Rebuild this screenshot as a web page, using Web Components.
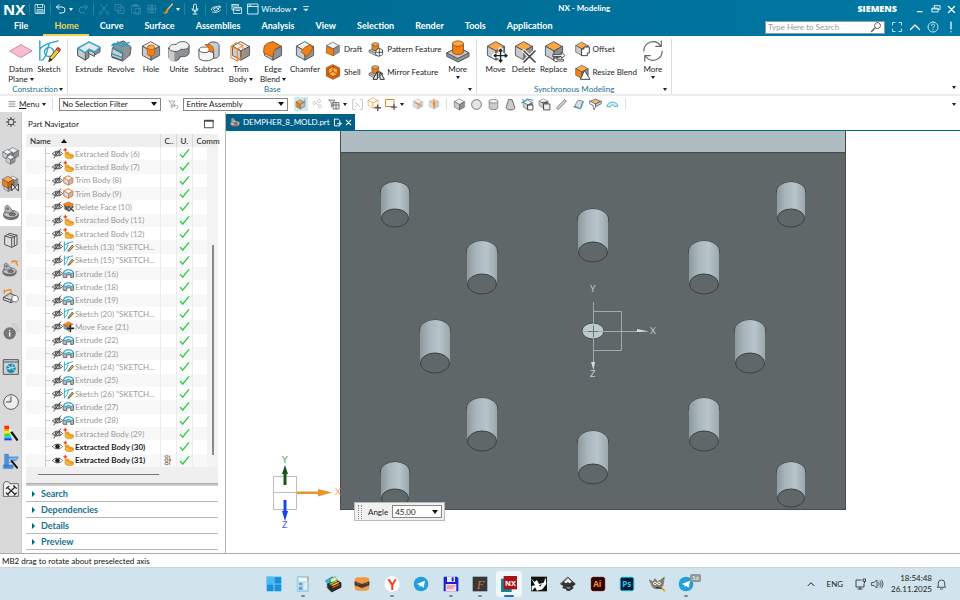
<!DOCTYPE html>
<html lang="en">
<head>
<meta charset="utf-8">
<title>NX - Modeling</title>
<style>
    body {
        margin: 0;
        min-height: 100vh;
        display: grid;
        grid-template-rows: auto auto auto 1fr auto auto;
        font: 8px/10px Lato, "Open Sans", sans-serif;
        color: #1c1c1c;
        background: #fff;
        --link: #17708f;
    }
    .work {
        display: grid;
        grid-template-columns: 22px 204px 1fr;
        min-height: 0;
    }
</style>
</head>
<body>
    <nx-titlebar></nx-titlebar>

    <nx-ribbon>
        <nx-group label="Construction">
            <nx-tool icon="datum" menu="inline">Datum<br>Plane</nx-tool>
            <nx-tool icon="sketch">Sketch</nx-tool>
        </nx-group>
        <nx-group label="Base">
            <nx-tool icon="extrude" wide>Extrude</nx-tool>
            <nx-tool icon="revolve" wide>Revolve</nx-tool>
            <nx-tool icon="hole">Hole</nx-tool>
            <nx-tool icon="unite">Unite</nx-tool>
            <nx-tool icon="subtract" wide>Subtract</nx-tool>
            <nx-tool icon="trim" menu="inline" wide>Trim<br>Body</nx-tool>
            <nx-tool icon="edge" menu="inline" wide>Edge<br>Blend</nx-tool>
            <nx-tool icon="chamfer" wide>Chamfer</nx-tool>
            <nx-stack>
                <nx-tool icon="draft" row>Draft</nx-tool>
                <nx-tool icon="shell" row>Shell</nx-tool>
            </nx-stack>
            <nx-stack>
                <nx-tool icon="pattern" row>Pattern Feature</nx-tool>
                <nx-tool icon="mirror" row>Mirror Feature</nx-tool>
            </nx-stack>
            <nx-tool icon="boss" menu="below">More</nx-tool>
        </nx-group>
        <nx-group label="Synchronous Modeling">
            <nx-tool icon="move">Move</nx-tool>
            <nx-tool icon="delete">Delete</nx-tool>
            <nx-tool icon="replace" wide>Replace</nx-tool>
            <nx-stack>
                <nx-tool icon="offset" row>Offset</nx-tool>
                <nx-tool icon="resize" row>Resize Blend</nx-tool>
            </nx-stack>
            <nx-tool icon="cycle" menu="below">More</nx-tool>
        </nx-group>
    </nx-ribbon>

    <nx-selection-bar></nx-selection-bar>

    <div class="work">
        <nx-resource-bar></nx-resource-bar>
        <nx-part-navigator>
            <nx-section>Search</nx-section>
            <nx-section>Dependencies</nx-section>
            <nx-section>Details</nx-section>
            <nx-section>Preview</nx-section>
        </nx-part-navigator>
        <nx-viewport>DEMPHER_8_MOLD.prt</nx-viewport>
    </div>

    <nx-status>MB2 drag to rotate about preselected axis</nx-status>
    <nx-taskbar></nx-taskbar>

<script>
(() => {
    // ---------- icon drawing helpers (24 x 24 grid) ----------
    const OR = ['#ffa743', '#f08019', '#d4660b'];
    const GR = ['#f0f1f2', '#c9cccf', '#8f9295'];
    const EDGE = '#4c4f52';
    const path = (d, stroke = '#555', w = 1.5, fill = 'none') =>
        `<path d="${d}" fill="${fill}" stroke="${stroke}" stroke-width="${w}" stroke-linejoin="round" stroke-linecap="round"/>`;
    const cube = (t = GR[0], l = GR[1], r = GR[2], s = EDGE) =>
        path('M12 2 21 7 12 12 3 7Z', s, 1, t) +
        path('M3 7 12 12V22L3 17Z', s, 1, l) +
        path('M21 7 12 12V22L21 17Z', s, 1, r);
    const mini = (body, x, y, k) => `<g transform="translate(${x} ${y}) scale(${k})">${body}</g>`;
    const cyl = (x, y, rx, ry, h, c, s = EDGE) =>
        path(`M${x - rx} ${y}v${h}a${rx} ${ry} 0 0 0 ${2 * rx} 0v${-h}Z`, s, 1, c[1]) +
        `<ellipse cx="${x}" cy="${y}" rx="${rx}" ry="${ry}" fill="${c[0]}" stroke="${s}"/>`;
    const pencil = path('M12 23 13 19 21 9 24 11.500 16 21Z', '#5c4a12', 1, '#f6cc3c') + path('M12 23 13 20 15 21.500Z', '#333', 1, '#333') + path('M20 10 21.500 8 24.500 10 23.500 12Z', '#a33', 1, '#e0505a');
    const cross4 = path('M17 10V24M10 17H24', '#fff', 5) + path('M17 10V24M10 17H24M15.500 12 17 10 18.500 12M15.500 22 17 24 18.500 22M12 15.500 10 17 12 18.500M22 15.500 24 17 22 18.500', '#222', 1.5);
    const plate = path('M2 14 11 9.500 22 14V17L12 22 2 17Z', EDGE, 1, GR[1]) + path('M2 14 12 18.500 22 14M12 18.500V22', EDGE, 1);
    const funnel = path('M2 4H14L9.500 10V16L6.500 18V10Z', '#666', 1.5, '#ddd');
    const ring = path('M1 15v3a11 5.500 0 0 0 22 0v-3Z', EDGE, 1, '#77797b') +
        '<ellipse cx="12" cy="15" rx="11" ry="5.500" fill="#c4c6c8" stroke="#4c4f52"/><ellipse cx="14" cy="15.500" rx="5" ry="2.200" fill="#777" stroke="#4c4f52"/>' +
        path('M3 13V6C3 1 8 1 10 5L16 12C12 13 8 14 3 13Z', EDGE, 1, '#b2b5b8') + '<circle cx="7" cy="7" r="1.800" fill="#666"/>';
    const plane = (r = 10) => `<circle cx="12" cy="12" r="${r}" fill="#249fd8"/><path d="M5.500 12 18 7 16 17.500 12 14.700 10 16.500 9.700 13.500Z" fill="#fff"/>`;
    const tile = (bg, edge, body) => `<rect x="2" y="2" width="20" height="20" rx="3" fill="${bg}" stroke="${edge}" stroke-width="1.500"/>${body}`;
    const word = (s, x, y, size, fill, extra = '') => `<text x="${x}" y="${y}" font-size="${size}" fill="${fill}" font-weight="700" font-family="Open Sans, sans-serif" ${extra}>${s}</text>`;

    const W = '#e8f4f8', DIM = '#3f8dab';
    const ICONS = {
        // quick access
        save: path('M3 3H19L21 5V21H3ZM7 3V9H17V3M6 21V13H18V21M8 16H16M8 18.500H16', W),
        undo: path('M8 3 3 8 8 13M3 8H14a6 6 0 0 1 0 12H9', W, 2),
        redo: path('M16 3 21 8 16 13M21 8H10a6 6 0 0 0 0 12H15', DIM, 2),
        cut: path('M6 3 16 17M18 3 8 17M5 17a3 3 0 1 0 .1 0M19 17a3 3 0 1 0 .1 0', DIM),
        copy: path('M3 3H14V16H3ZM9 8H20V21H9Z', DIM),
        paste: path('M4 5H18V20H4ZM8 3H14V7H8ZM11 11H21V22H11Z', DIM),
        target: path('M12 2V22M2 12H22M5 5H19V19H5ZM9 9H15V15H9Z', DIM),
        brush: path('M21 2 11 13', '#e7c392', 2.5) + path('M11 12 8 15C8 18 5 20 3 20C8 23 13 19 12 15Z', '#f08a1c', 1, '#f08a1c'),
        mic: path('M9 5a3 3 0 0 1 6 0V12a3 3 0 0 1-6 0ZM6 11a6 6 0 0 0 12 0M12 17V22M8 22H16', W, 1.8),
        rotate: path('M3 14C1 8 12 6 21 8M18 5 21 8 17 11M7 12 12 9 18 12 12 16ZM5 18C12 20 18 18 21 14', W, 1.8),
        cascade: path('M2 3H15V6M2 3V14H6M2 6H15M6 9H21V21H6ZM6 12H21M10 15H17', W, 1.6),
        windowed: path('M2 2H22V22H2ZM2 7H22M5 4.500H8', W, 1.8),
        overflow: path('M6 6H18', W, 2) + path('M7 12H17L12 17Z', W, 1, W),
        minimise: path('M6 18H17', '#fff', 3),
        restore: path('M8 4H22V13H18M8 4V9M3 10H17V19H3ZM3 12H17', '#fff', 2),
        close: path('M4 4 20 20M20 4 4 20', '#fff', 3.5),
        loupe: path('M10 14 3 21', '#555', 2.5) + path('M15 3a6 6 0 1 0 .1 0', '#555', 1.8),
        full: path('M3 8V3H8M16 3H21V8M21 16V21H16M8 21H3V16', '#bfe2ef', 2),
        up: path('M3 17 12 8 21 17', '#fff', 2.5),
        help: path('M12 2a10 10 0 1 0 .1 0M9 9C9 5 15 5 15 9C15 11.500 12 11.500 12 14M12 17V17.500', '#d5edf5', 2),
        bang: path('M12 2V16M12 21V21.500', '#fff', 2.5),
        // ribbon
        datum: path('M0 12 12 5 24 12 12 19Z', '#cf7f9c', 1, '#f4bdd0'),
        sketch: path('M2 1V22M2 10C7 4 14 3 22 1M4 22C10 20 10 8 12 5', '#27a5c4', 1.5) + path('M12 8a5 5 0 1 0 .1 0', '#27a5c4', 1.5) + pencil,
        extrude: path('M0 9V17L8 22 12 19V14L17 17 24 13V8L12 3Z', EDGE, 1, GR[2]) + path('M0 9 8 14V22L0 17ZM12 11 18 14V18L12 15Z', EDGE, 1, GR[1]) + path('M0 9 12 2 24 8 18 13 12 10 8 14Z', '#27a5c4', 1.5, '#e4e9ec'),
        revolve: path('M3 5 15 1 23 8 22 16 14 23 2 19 8 14Z', EDGE, 1, GR[2]) + path('M3 9 14 15 13 22 2 18Z', EDGE, 1, GR[1]) + path('M2 6C5 1 10 6 14 7C17 6 18 2 21 3M3 8 14 13M2 15 13 19M8 2 22 7', '#27a5c4', 1.5),
        hole: cube() + cyl(12, 8, 4, 2.5, 7, OR, '#c66009'),
        unite: path('M1 9V19C2 24 12 24 13 19V18C18 19 23 17 23 14V6Z', EDGE, 1, GR[2]) + path('M1 9V19C1 22 4 23 7 23V12Z', 'none', 0, GR[1]) + path('M1 9C1 6 5 4 9 5C10 1 22 0 23 6C23 9 19 11 14 10C12 14 1 13 1 9Z', EDGE, 1, GR[0]),
        subtract: path('M10 7C10 0 23 1 23 6V16C23 19 20 20 17 20V11Z', EDGE, 1, GR[1]) + path('M8 5C14 4 17 7 17 11V19L12 15 12 9Z', '#b95708', 1, OR[1]) + path('M1 11V19C1 24 16 24 17 19V14L12 12C10 15 1 14 1 11Z', EDGE, 1, '#f6f6f6') + path('M1 11C1 8 5 7 9 8', EDGE, 1),
        trim: cube() + path('M1 7 7 3 14 6V19L8 23 1 19ZM1 7 8 10 14 6M8 10V23', '#f08a2c', 1.2),
        edge: cube() + path('M2 10C2 5 6 3 12 2L21 7C15 8 12 11 12 19L2 14Z', '#a75108', 1, OR[1]),
        chamfer: cube() + path('M12 8 18 5 21 9 14 18 8 13Z', '#a75108', 1, OR[1]),
        draft: cube() + path('M4 9 13 12V22L2 18Z', '#a75108', 1, OR[1]),
        shell: path('M12 1 22 6V18L12 23 2 18V6Z', '#8a4406', 1, OR[2]) + path('M12 4 19 8V15L12 19 5 15V8Z', '#8a4406', 1, OR[0]) + path('M12 4V11L5 15M12 11 19 15', '#8a4406', 1),
        pattern: plate + cyl(11, 5, 5, 2.500, 7, OR) + path('M14 12a3 3 0 0 1 5 0a3 3 0 0 1 2 5a3 3 0 0 1-3 5a3 3 0 0 1-5-1a3 3 0 0 1-1-5a3 3 0 0 1 2-4ZM17 12V22M12 17H22', '#333', 1.2, '#fff'),
        mirror: plate + cyl(11, 5, 5, 2.500, 7, OR) + path('M14 12V23H8ZM18 12V23H24Z', '#222', 1.4, '#eee'),
        boss: path('M0 14 12 8 24 14V18L12 24 0 18Z', EDGE, 1, GR[2]) + path('M0 14 12 8 24 14 12 20Z', EDGE, 1, GR[1]) + cyl(12, 4, 6, 3, 9, OR, '#a75108'),
        move: cube(OR[0]) + cross4,
        delete: cube(OR[0]) + path('M12 12 24 24M24 12 12 24', '#fff', 4) + path('M12 12 24 24M24 12 12 24', '#444', 1.8),
        replace: cube(OR[0]) + path('M11 16H20V13L24 17 20 20V18H11ZM22 21H15V18.500L11 22 15 24V23H22Z', '#444', 1, '#fff'),
        offset: cube(OR[0]) + path('M12 12H15V9H23V18H20V22H12Z', '#444', 1.5, '#fff'),
        resize: cube(OR[0], OR[1]) + path('M16 10 24 23H10Z', '#444', 1.5, '#fff'),
        cycle: path('M2 12A10 10 0 0 1 20 6M22 12A10 10 0 0 1 4 18M21 1V7H15M3 23V17H9', '#666', 1.3),
        // selection bar
        funnelOff: mini(path('M2 4H14L9.500 10V16L6.500 18V10Z', '#999', 1.5, '#f4f4f4'), 2, 2, 1) + path('M16 12 13 15 16 18M13 15H19a3 3 0 0 1 0 6', '#999'),
        hot: mini(cube(OR[0], OR[1], '#b9bcc0'), 0, 2, .9) + path('M12 8H20V2', '#888'),
        chain: path('M5 7a3 3 0 1 0 .1 0M14 3a3 3 0 1 0 .1 0M16 14a3 3 0 1 0 .1 0M8 10 13 15', '#bbb'),
        funnelBox: funnel + path('M11 9H22V22H11ZM11 14H22M16 9V22', '#555', 1.5, '#eee'),
        brackets: path('M7 3H3V21H7M17 3H21V21H17M8 8 16 16M8 16 12 12', '#bbb'),
        boxSnap: mini(cube('#fff', '#fff', '#fff', '#ea7e18'), -2, -2, .95) + path('M18 13V23M13 18H23', '#555', 2.5),
        rectSnap: path('M2 3H18V17H2Z', '#ea7e18', 2) + path('M18 13V23M13 18H23', '#555', 2.5),
        boxA: cube('#eee', '#ddd', '#ccc', '#aaa') + path('M7 9 17 15', '#ea9a50', 3),
        boxB: cube('#f4d1ae', '#ddd', '#ccc', '#aaa') + path('M12 6V17', '#ea7e18', 3),
        box: cube(),
        ball: '<circle cx="12" cy="12" r="9" fill="#e4e5e6" stroke="#55585b" stroke-width="1.500"/>',
        can: cyl(12, 6, 8, 3.500, 12, GR),
        cone: path('M9 3H15L20 18A8 4 0 0 1 4 18Z', EDGE, 1.5, GR[1]),
        faceA: mini(cube(), 2, 2, .9) + path('M1 9 11 2 22 4M3 3 7 7', '#27a5c4', 2) + path('M13 13H22V22H13Z', '#333', 1.5, '#fff'),
        faceB: mini(cube(), 0, 0, .85) + path('M11 11H22V22H11ZM8 8H18', '#333', 1.5, '#eee'),
        slot: path('M3 18 18 3 21 6 6 21Z', '#555', 1.5, '#ddd'),
        sheet: path('M4 16 11 4 20 6 16 19Z', '#777', 1.5, '#ddd') + path('M4 16C7 13 12 22 16 19L21 7', '#27a5c4', 2),
        corner: path('M2 6 12 2 22 6 12 11Z', EDGE, 1.3, '#f7b57a') + path('M2 6 12 11V16L9 22 7 13 2 11Z', EDGE, 1.3, '#fff') + path('M22 6 12 11V16L22 11Z', EDGE, 1.3, GR[1]),
        arc: path('M2 15C4 5 20 5 22 15L16 16C15 12 9 12 8 16Z', '#27a5c4', 1.5, '#d5eff5'),
        // resource bar
        gear: path('M12 5a7 7 0 1 0 .1 0M12 1V5M12 19V23M1 12H5M19 12H23M4 4 7 7M17 17 20 20M20 4 17 7M4 20 7 17', '#333', 2.2),
        assy: mini(cube(), 5, -2, .85) + mini(cube(), -2, 1, .75) + mini(cube(), 3, 9, .7),
        constraint: mini(cube(), 6, -1, .75) + mini(cube(), 0, 9, .65) + mini(cube(OR[0], OR[1], OR[2]), -3, -1, .9) + path('M13 12V22L23 12V22Z', '#333', 1.5, '#fff'),
        part: ring,
        library: path('M3 6 10 2 21 5V19L13 23 3 19ZM3 6 13 9V23M13 9 21 5M8 4 17 7V21', '#555', 1.5, '#ddd'),
        partDim: mini(ring, -1, 3, .9) + path('M13 2 22 2M18 1 22 8M14 4 16 1', '#f08a2c', 1.8),
        measure: path('M2 5 11 2 13 8M2 3V8', '#f08a2c', 2) + path('M1 14 10 8 22 13V17L12 22 1 18ZM1 14 12 18 22 13M12 18V22', '#444', 1.3, GR[1]) + path('M18 11a5 5 0 1 0 .1 0', '#555', 1.2, '#fff'),
        info: '<circle cx="10" cy="14" r="8.500" fill="#777" stroke="#555"/>' + path('M10 13V18M10 9.500V10', '#fff', 2) + path('M13 3C18 3 21 7 21 12M14 0C20 0 24 5 24 11', '#bbb', 1.3),
        web: path('M1 1H23V23H1Z', '#555', 1.5, '#c9d4d8') + path('M1 4.500H23', '#555', 1.5) + '<circle cx="12" cy="14" r="7" fill="#1989ae"/>' + path('M7 10 11 12 10 16M14 9 13 14 17 17M6 15 18 12', '#bfe4ef', 1.5),
        clock: path('M12 1a11 11 0 1 0 .1 0M12 4V12H5', '#444', 1.3, '#eee'),
        palette: '<path d="M2 1H9V6H2Z" fill="#ff2a12"/><path d="M2 6H9V9H2Z" fill="#ffa000"/><path d="M2 9H10V13H2Z" fill="#ffee00"/><path d="M2 13H11V17H2Z" fill="#3bd831"/><path d="M2 17H12V20H2Z" fill="#00d8e8"/><path d="M2 20H13V23H2Z" fill="#1d3cff"/>' + path('M13 11 21 22', '#111', 3.5) + path('M10 7 12 9', '#fff', 2.5),
        sim: path('M3 2H8V20H3ZM1 18H15V23H1Z', '#2d77c4', 1, '#4b94dc') + path('M9 6H23L20 11H12ZM9 14H17', '#2d77c4', 1, '#79b2e8') + path('M13 12 21 22', '#111', 3),
        tools: path('M1 4 3 1H8L10 4H23V23H1Z', '#555', 1.3, '#f4f4f4') + path('M7 10 18 20M18 9 7 20M5 11 9 8M16 7 20 11M5 18 8 21M17 21 20 18', '#333', 2),
        // navigator
        hidden: path('M1 13C6 5 18 5 23 12C18 19 6 19 1 13M12 9a3.500 3.500 0 1 0 .1 0M4 22 19 2M8 9 6 16M16 9 18 15', '#444', 2),
        shown: path('M1 12C6 5 18 5 23 12C18 19 6 19 1 12', '#555', 1.8, '#fff') + '<circle cx="12" cy="12" r="5" fill="#222"/>',
        body: path('M5 11C5 8 13 8 13 11V14C16 12 23 14 23 18V20C21 24 8 24 5 20Z', '#c67a10', 1.3, '#ffb52e') + path('M5 11C6 14 12 14 13 11M13 14C13 18 20 19 22 17', '#c67a10', 1.3) + path('M5 1V7M2 4H8', '#e63c1c', 2.6),
        trimS: cube('#fff', '#ddd', '#bbb', '#777') + path('M2 6 11 2 21 7V17L11 22 2 17ZM2 6 12 12V22M12 12 21 7', '#ee8238', 1.8),
        delFace: path('M12 2 23 7 19 12H5L1 7Z', '#8a4406', 1, OR[1]) + path('M3 10 12 14V22L4 18Z', EDGE, 1, '#555') + path('M12 12 23 22M22 12 13 22', '#444', 3),
        moveFace: path('M12 2 22 7 12 13 1 8Z', '#8a4406', 1, OR[1]) + path('M2 9 12 14V21L3 17Z', EDGE, 1, '#999') + path('M16 10V23M10 16H23', '#222', 3.5),
        sketchS: path('M3 2V22M3 9C8 5 14 3 21 2M5 20C10 15 10 9 12 5', '#27a5c4', 2) + path('M11 22 13 18 20 9 23 12 16 20Z', '#333', 1.5, '#f0b132'),
        extrudeS: path('M1 10 6 5H18L23 10V20L17 21V15H8V21L1 20Z', '#555', 1.8, '#b9bdc1') + path('M1 10C5 2 19 2 23 10L18 13C15 9 9 9 6 13Z', '#27a5c4', 2.2, '#e3f3f7'),
        check: path('M3 14 8 20 21 4', '#23cf35', 3),
        pins: path('M6 2H12V7H6ZM6 10H12V15H6ZM6 18H12V23H6Z', '#555', 1.5, '#fff') + path('M16 2V23', '#555', 1.5) + '<circle cx="17" cy="12" r="3" fill="#f08019"/>',
        pane: path('M2 3H22V21H2Z', '#111', 1.8) + path('M2 5H22', '#111', 2.5),
        sheetW: path('M4 3H14L18 7V12M4 3V21H18V17M12 15H22M19 12 22 15 19 18', '#fff', 2.4),
        // taskbar
        windows: '<path d="M1 1H11.500V11.500H1ZM12.500 1H23V11.500H12.500ZM1 12.500H11.500V23H1ZM12.500 12.500H23V23H12.500Z" fill="#1494e0"/><path d="M1 1H11.500V11.500H1Z" fill="#48bdf3"/>',
        calc: path('M4 1H20V23H4Z', '#8fb4cf', 1, '#b9dcf2') + '<path d="M6 3H18V8H6Z" fill="#eef8ff"/><path d="M6 10H11V14H6ZM6 16H11V21H6Z" fill="#5fa3d6"/><path d="M13 10H18V21H13Z" fill="#dcebf5"/><path d="M18 1H20V8H18Z" fill="#e7a640"/>',
        files: path('M1 7 11 1 15 8 7 15Z', '#197ab5', 1, '#35b0e8') + path('M8 5 15 1 20 8 10 13Z', '#5a8f20', 1, '#e9f2d0') + path('M4 12 18 7 24 10V17L10 24 4 18Z', '#111', 1, '#2d2a28') + path('M8 12 17 8', '#8fc320', 2.5) + path('M11 14 20 10', '#f3c52f', 2) + path('M12 17 21 13', '#e2422d', 2),
        archive: '<rect x="1" y="2" width="22" height="20" rx="5" fill="#f09a42"/><path d="M1 8 12 12 23 8V14L12 18 1 14Z" fill="#3b3a3c"/><path d="M4 10 8 12 6 13ZM18 11 21 10 19 13Z" fill="#e8552d"/>',
        yandex: '<circle cx="12" cy="12" r="11.500" fill="#fff"/>' + '<path d="M5 5H9L12.500 11 16 5H19L14 14V21H11V14Z" fill="#fb3a1c"/>',
        telegram: plane(11),
        floppy: '<path d="M1 1H21L23 3V23H1Z" fill="#1c24c9"/><path d="M6 1H18V9H6Z" fill="#e8ecf4"/><path d="M13 2H16V8H13Z" fill="#1c24c9"/><path d="M4 12H20V23H4Z" fill="#f5d9e2"/>' + path('M6 15H18M6 18H15', '#c36', 1),
        fusion: '<path d="M1 1H23V23H1Z" fill="#37373a"/>' + '<text x="7" y="19" font-size="19" font-style="italic" fill="#d0713a" font-family="Liberation Serif, serif">F</text>',
        nx: '<path d="M0 4H16V24H0Z" fill="#10888f"/><path d="M4 0H24V20H4Z" fill="#a81319"/>' + word('NX', 6, 15, 11, '#fff'),
        rhino: '<path d="M0 1H24V23H0Z" fill="#111"/><path d="M0 3 5 9 9 6 12 12 19 10 22 2 23 12 17 20 9 22 6 17 1 23V15L6 14Z" fill="#fff"/><path d="M12 14 16 12 14 16Z" fill="#111"/>',
        inkscape: path('M12 2 23 12 18 16 20 18 14 22 9 21 11 19 4 18 6 15 1 12Z', '#222', 1, '#333') + '<path d="M12 3 18 9 14 11 12 9 9 11 6 9Z" fill="#e6eef4"/><path d="M8 16 17 17 13 20Z" fill="#7b8fa0"/>',
        ai: tile('#330000', '#3c0a05', word('Ai', 5, 16, 12, '#ff9a00')),
        ps: tile('#001e36', '#17a7c9', word('Ps', 5, 16, 12, '#31c5f0')),
        gimp: path('M1 6 6 9 9 4 13 9 23 2 21 14C18 20 9 21 5 16Z', '#6f675a', 1, '#8b8171') + '<circle cx="9" cy="11" r="2.500" fill="#fff"/><circle cx="15" cy="11" r="2.500" fill="#fff"/><circle cx="9" cy="11" r="1" fill="#111"/><circle cx="15" cy="11" r="1" fill="#111"/>' + path('M11 17 20 19', '#333', 2) + path('M20 19 23 22', '#e89a2a', 2.5),
        chevron: path('M3 17 12 8 21 17', '#222', 3),
        net: path('M12 4H2V18H18V12M6 22H14M10 18V22M17 2H21V7H17ZM19 7V10', '#333', 1.8),
        sound: path('M2 9H6L12 4V20L6 15H2ZM15 9C17 11 17 13 15 15M18 6C21 10 21 14 18 18M21 4C25 9 25 15 21 20', '#333', 1.6),
        bell: path('M3 18H21L19 15V9A7 7 0 0 0 5 9V15ZM9 21C11 23 13 23 15 21', '#333', 1.8),
        menu: path('M3 5H21M3 12H21M3 19H21', '#444', 1.8)
    };

    const RESET = `
        :host, * { box-sizing: border-box; }
        button, input, select {
            margin: 0; padding: 0; border: 0; background: none;
            font: inherit; color: inherit; border-radius: 0;
        }
        button { cursor: pointer; }
        .caret { display: inline-block; border: 2px solid transparent; border-top: 3px solid currentColor; border-bottom: 0; }
    `;
    const icon = (name, size = 16) => `<nx-icon name="${name}" size="${size}"></nx-icon>`;
    const iconButton = (name, size, label = name, cls = '') =>
        `<button type="button" class="${cls}" aria-label="${label}">${icon(name, size)}</button>`;

    class NxElement extends HTMLElement {
        constructor() {
            super();
            this.attachShadow({mode: 'open'});
        }
        connectedCallback() {
            this.shadowRoot.innerHTML = `<style>${RESET}${this.css()}</style>${this.html()}`;
        }
        css() { return ''; }
        html() { return '<slot></slot>'; }
    }

    class NxIcon extends NxElement {
        css() {
            const s = this.getAttribute('size') || 16;
            return `:host { display: block; flex: none; width: ${s}px; height: ${s}px; } svg { display: block; width: 100%; height: 100%; overflow: visible; }`;
        }
        html() {
            return `<svg viewBox="0 0 24 24" aria-hidden="true">${ICONS[this.getAttribute('name')] || ''}</svg>`;
        }
    }

    class NxTitlebar extends NxElement {
        css() {
            return `
                :host { display: block; color: #fff; background: linear-gradient(90deg, #00678c, #0078a4); }
                nav, .quick, .right { display: flex; align-items: center; }
                header { height: 18px; padding: 0 4px 0 3px; display: grid; grid-template-columns: auto 1fr auto; }
                .quick { gap: 4px; }
                .quick i { width: 1px; height: 12px; background: #2b7f9f; }
                .quick button { display: flex; align-items: center; gap: 2px; }
                .logo { font: 700 15px/16px "Open Sans", sans-serif; }
                h1 { margin: 0; text-align: center; font: 700 8px/17px Lato, sans-serif; }
                .right { justify-content: flex-end; gap: 6px; }
                .brand { font: 800 9px/16px "Open Sans", sans-serif; margin-right: 12px; }
                nav { height: 18px; padding-left: 3px; align-items: stretch; }
                .tab { padding: 0 10px 0 11px; font: 700 9px/16px Lato, sans-serif; border-bottom: 2px solid transparent; }
                .tab:first-child { margin-right: 5px; }
                .tab.on { color: #f2d25c; border-color: #f2d25c; }
                .find { display: flex; align-items: center; width: 120px; height: 13px; margin-left: auto; align-self: center;
                    background: #fff; border: 1px solid #8b9ba2; padding: 0 2px; }
                .find input { flex: 1; min-width: 0; color: #444; }
                .find input::placeholder { color: #999; opacity: 1; }
                .right.tools { margin: 0 3px 0 6px; }
            `;
        }
        html() {
            const tabs = ['File', 'Home', 'Curve', 'Surface', 'Assemblies', 'Analysis', 'View', 'Selection', 'Render', 'Tools', 'Application'];
            return `
                <header>
                    <div class="quick">
                        <span class="logo">NX</span><i></i>
                        ${iconButton('save', 12)}
                        <i></i>
                        <button type="button" aria-label="Undo">${icon('undo', 12)}<span class="caret"></span></button>
                        ${iconButton('redo', 12)}
                        <i></i>
                        ${['cut', 'copy', 'paste', 'target'].map(n => iconButton(n, 12)).join('')}
                        <button type="button" aria-label="Brush">${icon('brush', 12)}<span class="caret"></span></button>
                        <i></i>
                        ${iconButton('mic', 12)}
                        <i></i>
                        ${iconButton('rotate', 12)}
                        <i></i>
                        ${iconButton('cascade', 12)}
                        <button type="button">${icon('windowed', 12)}Window<span class="caret"></span></button>
                        ${iconButton('overflow', 10, 'Toolbar options')}
                    </div>
                    <h1>NX - Modeling</h1>
                    <div class="right">
                        <span class="brand">SIEMENS</span>
                        ${iconButton('minimise', 10)}${iconButton('restore', 10)}${iconButton('close', 9)}
                    </div>
                </header>
                <nav>
                    ${tabs.map(t => `<button type="button" class="tab${t === 'Home' ? ' on' : ''}">${t}</button>`).join('')}
                    <label class="find"><input type="text" placeholder="Type Here to Search" aria-label="Search">${icon('loupe', 12)}</label>
                    <div class="right tools">${iconButton('full', 12)}${iconButton('up', 12)}${iconButton('help', 12)}${iconButton('bang', 12)}</div>
                </nav>
            `;
        }
    }

    class NxRibbon extends NxElement {
        css() {
            return `
                :host { display: flex; align-items: stretch; padding-left: 2px; border-bottom: 2px solid #ececec; background: #fff; }
                .corner { align-self: flex-end; margin: 0 4px 5px auto; }
            `;
        }
        html() { return '<slot></slot><span class="caret corner"></span>'; }
    }

    class NxGroup extends NxElement {
        css() {
            return `
                :host { display: flex; flex-direction: column; margin-top: 3px; padding: 0 4px 0 5px; border-right: 1px solid #dcdcdc; }
                .tools { display: flex; flex: 1; padding-bottom: 1px; }
                footer { display: grid; grid-template-columns: minmax(0, 1fr) auto minmax(0, 1fr); align-items: center; height: 9px; color: var(--link); line-height: 9px; }
                footer .caret { justify-self: end; color: #222; }
            `;
        }
        html() {
            return `<div class="tools"><slot></slot></div><footer><span></span><span>${this.getAttribute('label')}</span><span class="caret"></span></footer>`;
        }
    }

    class NxStack extends NxElement {
        css() { return ':host { display: flex; flex-direction: column; gap: 7px; padding: 2px 2px 0 4px; }'; }
    }

    class NxTool extends NxElement {
        css() {
            return `
                :host { display: block; width: 28px; padding-top: 1px; }
                :host([wide]) { width: 32px; }
                :host([row]) { width: auto; padding-top: 0; }
                button { display: flex; flex-direction: column; align-items: center; gap: 2px; width: 100%; line-height: 10px; white-space: nowrap; }
                :host([row]) button { flex-direction: row; gap: 3px; }
                .caret { vertical-align: middle; margin-left: 2px; }
                .below { margin: 0; }
            `;
        }
        html() {
            const menu = this.getAttribute('menu');
            return `<button type="button">${icon(this.getAttribute('icon'), this.hasAttribute('row') ? 16 : 22)}
                <span><slot></slot>${menu === 'inline' ? '<span class="caret"></span>' : ''}</span>
                ${menu === 'below' ? '<span class="caret below"></span>' : ''}</button>`;
        }
    }

    class NxSelect extends NxElement {
        css() {
            return `
                :host { display: grid; align-items: center; width: 102px; }
                :host([wide]) { width: 105px; }
                select, .caret { grid-area: 1 / 1; }
                select { appearance: none; width: 100%; height: 13px; padding: 0 2px; border: 1px solid #888; background: #fff; }
                .caret { justify-self: end; margin-right: 4px; pointer-events: none; border-width: 4px 3px 0; color: #111; }
            `;
        }
        html() {
            return `<select aria-label="${this.getAttribute('label')}"><option>${this.getAttribute('value')}</option></select><span class="caret"></span>`;
        }
    }

    class NxSelectionBar extends NxElement {
        css() {
            return `
                :host { display: flex; align-items: center; height: 16px; padding-left: 8px; gap: 4px; background: #fff; }
                button { display: flex; align-items: center; gap: 3px; }
                button.on { background: #cfe9f0; padding: 1px; }
                u { text-underline-offset: 1px; }
                i { width: 1px; height: 12px; background: #ddd; margin: 0 2px; }
                nx-select { margin-right: 2px; }
                .end { margin: 0 4px 0 auto; }
            `;
        }
        html() {
            const caret = '<span class="caret"></span>';
            return `
                <button type="button">${icon('menu', 8)}<span><u>M</u>enu</span>${caret}</button><i></i>
                <nx-select label="Selection filter" value="No Selection Filter"></nx-select>
                ${iconButton('funnelOff', 12)}
                <nx-select label="Scope" value="Entire Assembly" wide></nx-select>
                ${iconButton('hot', 12, 'Highlight', 'on')}
                ${iconButton('chain', 12)}
                <button type="button" aria-label="Filter">${icon('funnelBox', 12)}${caret}</button>
                ${iconButton('brackets', 13)}${iconButton('boxSnap', 13)}
                <button type="button" aria-label="Snap">${icon('rectSnap', 12)}${caret}</button>
                <span></span>${iconButton('boxA', 12)}${iconButton('boxB', 12)}<i></i>
                ${['box', 'ball', 'can', 'cone', 'faceA', 'faceB', 'slot', 'sheet', 'corner', 'arc'].map(n => iconButton(n, 13)).join('')}
                <i></i><span class="caret end"></span>
            `;
        }
    }

    class NxResourceBar extends NxElement {
        css() {
            return `
                :host { display: flex; flex-direction: column; background: #d9d9d9; border-right: 1px solid #c8c8c8; }
                button { display: grid; place-items: center; height: 28px; }
                .small { height: 20px; margin-bottom: 10px; }
                .tall { height: 35px; }
                .gap { margin-top: 4px; }
                .on { background: #fff; }
            `;
        }
        html() {
            return iconButton('gear', 10, 'Options', 'small') +
                iconButton('assy', 16) + iconButton('constraint', 16) +
                iconButton('part', 16, 'Part Navigator', 'on') +
                iconButton('library', 16) + iconButton('partDim', 16) + iconButton('measure', 16) +
                iconButton('info', 16, 'info', 'tall gap') + iconButton('web', 16, 'web', 'tall') + iconButton('clock', 16, 'History', 'tall') +
                iconButton('palette', 16) + iconButton('sim', 16) + iconButton('tools', 16);
        }
    }

    const KINDS = {
        'Extracted Body': 'body', 'Trim Body': 'trimS', 'Delete Face': 'delFace',
        'Move Face': 'moveFace', 'Sketch': 'sketchS', 'Extrude': 'extrudeS'
    };
    const FEATURES = [
        ['Extracted Body', 6], ['Extracted Body', 7], ['Trim Body', 8], ['Trim Body', 9], ['Delete Face', 10],
        ['Extracted Body', 11], ['Extracted Body', 12], ['Sketch', 13], ['Sketch', 15], ['Extrude', 16],
        ['Extrude', 18], ['Extrude', 19], ['Sketch', 20], ['Move Face', 21], ['Extrude', 22], ['Extrude', 23],
        ['Sketch', 24], ['Extrude', 25], ['Sketch', 26], ['Extrude', 27], ['Extrude', 28],
        ['Extracted Body', 29], ['Extracted Body', 30], ['Extracted Body', 31]
    ];

    class NxPartNavigator extends NxElement {
        css() {
            return `
                :host { display: flex; flex-direction: column; padding: 0 7px 3px 4px; border-right: 1px solid #b5b5b5; background: #fff; min-width: 0; }
                header { display: flex; justify-content: space-between; align-items: center; height: 22px; padding: 2px 4px 0 2px; }
                h2 { margin: 0; font: inherit; }
                .tree { flex: 1; display: flex; flex-direction: column; background: #efefef; }
                .scroll { flex: 1; display: grid; grid-template-columns: minmax(0, 1fr) 11px; }
                table { width: 100%; height: 100%; border-collapse: collapse; table-layout: fixed; grid-area: 1 / 1 / 2 / 3; }
                th { font-weight: 500; text-align: left; height: 13px; padding: 0 0 0 4px; border-right: 1px solid #d5d5d5; white-space: nowrap; background: #efefef; line-height: 12px; }
                th:last-child { border: 0; }
                th .caret { margin-left: 10px; border: 3px solid transparent; border-bottom: 4px solid #111; border-top: 0; vertical-align: middle; }
                td { padding: 0; border-right: 1px solid #ececec; line-height: 12px; color: #999; background: #fff; vertical-align: middle; }
                tr:nth-child(even) td { background: #f8f8f8; }
                td nx-icon { margin: 0 auto; }
                .name { display: flex; align-items: center; margin-left: 19px; padding-left: 6px; height: 13px; border-left: 1px solid #ccc; white-space: nowrap; }
                .name::before { content: ""; width: 4px; margin-left: -6px; margin-right: 2px; border-top: 1px solid #ccc; }
                .name nx-icon { margin: 0; }
                .name span { margin-left: 1px; }
                .shown { color: #1c1c1c; font-weight: 700; }
                .bar { grid-area: 1 / 2; position: relative; margin-top: 13px; background: #f3f3f3; display: flex; flex-direction: column; align-items: center; padding: 98px 0 12px; }
                .bar::before { content: ""; width: 2px; flex: 1; background: #8a8a8a; }
                .hbar { height: 16px; padding: 7px 59px 0 12px; }
                .hbar::before { content: ""; display: block; height: 1px; background: #777; }
                .split { height: 3px; background: #ccc; border-top: 1px solid #aaa; }
            `;
        }
        html() {
            const last = FEATURES[FEATURES.length - 1][1];
            const rows = FEATURES.map(([kind, n]) => {
                const shown = n >= 30;
                const text = `${kind} (${n})${kind === 'Sketch' ? ' "SKETCH...' : ''}`;
                return `<tr><td><div class="${shown ? 'name shown' : 'name'}">${icon(shown ? 'shown' : 'hidden', 11)}${icon(KINDS[kind], 11)}<span>${text}</span></div></td>
                    <td>${n === last ? icon('pins', 10) : ''}</td><td>${icon('check', 11)}</td><td></td></tr>`;
            }).join('');
            return `
                <header><h2>Part Navigator</h2>${iconButton('pane', 10, 'Undock')}</header>
                <div class="tree">
                    <div class="scroll">
                        <table>
                            <colgroup><col style="width:134px"><col style="width:16px"><col style="width:16px"><col></colgroup>
                            <thead><tr><th>Name<span class="caret"></span></th><th>C..</th><th>U.</th><th>Comm</th></tr></thead>
                            <tbody>${rows}</tbody>
                        </table>
                        <div class="bar"></div>
                    </div>
                    <div class="hbar"></div>
                </div>
                <div class="split"></div>
                <slot></slot>
            `;
        }
    }

    class NxSection extends NxElement {
        css() {
            return `
                :host { display: block; border-bottom: 1px solid #b9b9b9; color: var(--link); }
                button { display: flex; align-items: center; gap: 6px; width: 100%; height: 15px; padding: 1px 0 0 6px; font: 700 9px/14px Lato, sans-serif; }
                button::before { content: ""; border: 3px solid transparent; border-left: 3px solid #005f83; border-right: 0; }
            `;
        }
        html() { return '<button type="button" aria-expanded="false"><slot></slot></button>'; }
    }

    // pins of the mould: bottom face centre, radius, length
    const PINS = [
        [395, 218, 14, 27], [791, 218, 14, 27], [593, 252, 15, 33], [482, 284, 15, 33], [704, 284, 15, 33],
        [435, 363, 15, 33], [750, 363, 15, 33], [482, 441, 15, 33], [704, 441, 15, 33], [593, 474, 15, 33],
        [395, 498, 14, 27], [791, 498, 14, 27]
    ];

    class NxViewport extends NxElement {
        css() {
            return `
                :host { display: flex; flex-direction: column; position: relative; min-width: 0; background: #fff; }
                .tabs { display: flex; padding-top: 2px; border-bottom: 1px solid #00688e; }
                .tab { display: flex; align-items: center; gap: 3px; height: 16px; padding: 0 3px 0 4px; background: #005f87; color: #fff; }
                .tab button { display: block; }
                svg.model { flex: 1 1 0; height: 0; min-height: 320px; width: 100%; }
                form { position: absolute; left: 128px; bottom: 32px; display: flex; align-items: center; gap: 4px; height: 19px; padding: 0 2px 0 3px;
                    background: #f0f0f0; border: 1px solid #b9b9b9; }
                form nx-select { width: 50px; }
                .grip { width: 4px; height: 14px; margin-right: 2px; border: 1px dotted #888; border-width: 0 1px; }
                label { display: flex; align-items: center; gap: 4px; }
            `;
        }
        html() {
            const pin = ([x, y, r, h]) => {
                const ry = r === 15 ? 10 : 9;
                return `<ellipse cx="${x}" cy="${y - h}" rx="${r + .5}" ry="${ry}" fill="none" stroke="#3f4647"/>
                    <path d="M${x - r} ${y}V${y - h}A${r} ${ry} 0 0 1 ${x + r} ${y - h}V${y}Z" fill="url(#steel)"/>
                    <ellipse cx="${x}" cy="${y}" rx="${r - .5}" ry="${ry}" fill="#5f6768" stroke="#3a4142"/>`;
            };
            return `
                <div class="tabs"><div class="tab">${icon('part', 10)}<slot></slot>${iconButton('sheetW', 9, 'Modified')}${iconButton('close', 7, 'Close')}</div></div>
                <svg class="model" viewBox="226 131 734 422" preserveAspectRatio="xMidYMid meet" font-family="Lato, sans-serif" font-size="9">
                    <defs><linearGradient id="steel">
                        <stop offset="0" stop-color="#8c999d"/><stop offset=".3" stop-color="#a8b5ba"/>
                        <stop offset=".65" stop-color="#b7c5cb"/><stop offset="1" stop-color="#9aa7ac"/>
                    </linearGradient></defs>
                    <path d="M341 131H845V153H341Z" fill="#afbcc2"/>
                    <path d="M341 152H845V510H341Z" fill="#5f6768"/>
                    <path d="M340.500 131V510M341 152.500H845M341 509.500H845M845.500 131V510" stroke="#454c4d" fill="none"/>
                    ${PINS.map(pin).join('')}
                    <ellipse cx="593" cy="331" rx="11" ry="8" fill="#bccacd" stroke="#444b4c"/>
                    <g stroke="#9fabae" fill="none">
                        <path d="M593.500 302V364M582 331.500H640M593 311.500H621.500V350.500H593"/>
                    </g>
                    <path d="M588 331.500H598M593.500 326V337" stroke="#69767a"/>
                    <path d="M637 329 649 331.500 637 332ZM591 362H595L593.500 370Z" fill="#d3dcdf"/>
                    <g fill="#c3cccf"><text x="590" y="292">Y</text><text x="650" y="334">X</text><text x="590" y="377">Z</text></g>
                    <path d="M273.500 476.500H296.500V509.500H273.500ZM273.500 492.500H296.500" fill="none" stroke="#bdbdbd"/>
                    <path d="M283.500 485V474H282L285 465 288 474H286.500V485Z" fill="#14571b"/>
                    <path d="M297 491.500H318V489L332 492.500 318 496.500V494H297Z" fill="#e8942a"/>
                    <path d="M283.500 500H286.500V511H288L285 521 282 511H283.500Z" fill="#1446f0"/>
                    <text x="282" y="463" fill="#4a9950">Y</text><text x="335" y="495" fill="#f0a060">X</text><text x="282" y="528" fill="#4a5cf0">Z</text>
                </svg>
                <form><span class="grip"></span><label>Angle <nx-select label="Angle" value="45.00"></nx-select></label></form>
            `;
        }
    }

    class NxStatus extends NxElement {
        css() { return ':host { display: block; padding: 1px 2px 0; height: 15px; line-height: 12px; border-top: 1px solid #aaa; border-bottom: 1px solid #ccd5da; color: #111; }'; }
    }

    class NxTaskbar extends NxElement {
        css() {
            return `
                :host { display: grid; grid-template-columns: 1fr 46% 1fr; align-items: center; height: 32px; background: #d1e4ed; color: #222; }
                .apps { display: grid; grid-template-columns: repeat(15, 1fr); grid-column: 2; justify-items: center; }
                .apps button { position: relative; display: grid; place-items: center; width: 26px; height: 26px; border-radius: 3px; }
                .on { background: #eff7fa; }
                .run::after, .on::after { content: ""; position: absolute; bottom: 0; width: 4px; height: 2px; border-radius: 1px; background: #7d8a90; }
                .on::after { width: 10px; background: #1a6fc4; }
                b { position: absolute; top: 3px; right: -2px; padding: 0 2px; border-radius: 2px; background: #8f979b; color: #fff; font: 6px/8px Lato, sans-serif; }
                .tray { display: flex; align-items: center; justify-content: flex-end; padding-right: 13px; gap: 4px; }
                .tray span { margin: 0 8px; }
                time { text-align: right; margin-left: 4px; line-height: 11px; }
            `;
        }
        html() {
            const apps = ['windows', 'calc run', 'files', 'archive', 'yandex run', 'telegram', 'floppy run', 'fusion run', 'nx on', 'rhino', 'inkscape', 'ai', 'ps', 'gimp', 'telegram run'];
            return `
                <div class="apps">${apps.map((a, i) => {
                    const [name, state = ''] = a.split(' ');
                    return `<button type="button" class="${state}" aria-label="${name}">${icon(name, 16)}${i === apps.length - 1 ? '<b>56</b>' : ''}</button>`;
                }).join('')}</div>
                <div class="tray">${icon('chevron', 8)}<span>ENG</span>${icon('net', 12)}${icon('sound', 12)}
                    <time datetime="2025-11-26T18:54:48">18:54:48<br>26.11.2025</time>${icon('bell', 11)}</div>
            `;
        }
    }

    customElements.define('nx-icon', NxIcon);
    customElements.define('nx-select', NxSelect);
    customElements.define('nx-titlebar', NxTitlebar);
    customElements.define('nx-ribbon', NxRibbon);
    customElements.define('nx-group', NxGroup);
    customElements.define('nx-stack', NxStack);
    customElements.define('nx-tool', NxTool);
    customElements.define('nx-selection-bar', NxSelectionBar);
    customElements.define('nx-resource-bar', NxResourceBar);
    customElements.define('nx-part-navigator', NxPartNavigator);
    customElements.define('nx-section', NxSection);
    customElements.define('nx-viewport', NxViewport);
    customElements.define('nx-status', NxStatus);
    customElements.define('nx-taskbar', NxTaskbar);
})();
</script>
</body>
</html>
